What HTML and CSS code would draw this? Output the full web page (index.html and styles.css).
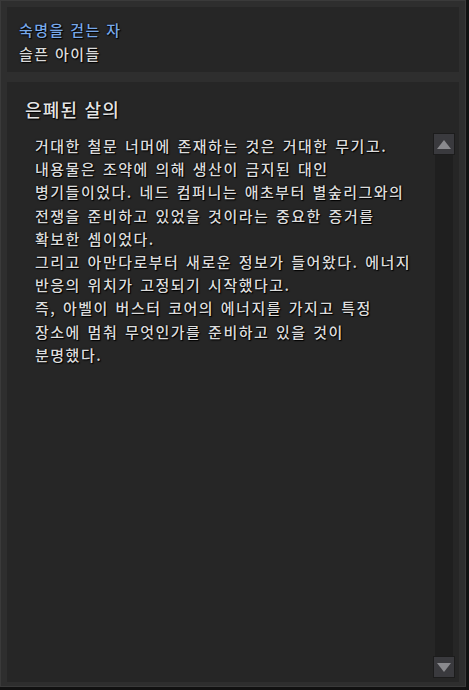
FILE: index.html
```html
<!DOCTYPE html>
<html lang="ko">
<head>
<meta charset="utf-8">
<link rel="stylesheet" href="styles.css">
</head>
<body>
<div class="frame">
  <header class="head">
    <div class="quest">숙명을 걷는 자</div>
    <div class="chapter">슬픈 아이들</div>
  </header>
  <section class="panel">
    <h1 class="title">은폐된 살의</h1>
    <div class="content">
      <p class="body">거대한 철문 너머에 존재하는 것은 거대한 무기고.<br>내용물은 조약에 의해 생산이 금지된 대인<br>병기들이었다. 네드 컴퍼니는 애초부터 별숲리그와의<br>전쟁을 준비하고 있었을 것이라는 중요한 증거를<br>확보한 셈이었다.<br>그리고 아만다로부터 새로운 정보가 들어왔다. 에너지<br>반응의 위치가 고정되기 시작했다고.<br>즉, 아벨이 버스터 코어의 에너지를 가지고 특정<br>장소에 멈춰 무엇인가를 준비하고 있을 것이<br>분명했다.</p>
      <div class="scrollbar">
        <div class="sb-btn"><svg width="14" height="9" viewBox="0 0 14 9"><polygon points="7,0 14,9 0,9" fill="#8a8a8e"/></svg></div>
        <div class="sb-track"></div>
        <div class="sb-btn"><svg width="14" height="9" viewBox="0 0 14 9"><polygon points="0,0 14,0 7,9" fill="#8a8a8e"/></svg></div>
      </div>
    </div>
  </section>
</div>
</body>
</html>
```
FILE: styles.css
```css
html, body {
  margin: 0;
  padding: 0;
  background: #111;
}
body {
  width: 469px;
  height: 690px;
  font-family: "Noto Sans CJK KR", "Noto Sans", sans-serif;
}
.frame {
  box-sizing: border-box;
  width: 466px;
  height: 687px;
  background: #2e2e2e;
  border: 1px solid #3a3a3a;
  padding: 6px 6px 4px 6px;
  display: flex;
  flex-direction: column;
  gap: 10px;
}
.head {
  background: #262626;
  height: 65px;
  padding: 14px 0 0 12px;
  box-sizing: border-box;
}
.quest {
  color: #78a8e8;
  font-size: 15px;
  font-weight: 500;
  line-height: 18px;
  letter-spacing: 1.4px;
  text-shadow: 0 0 2px #000, 1px 1px 1px #000;
}
.chapter {
  margin-top: 6px;
  color: #dadada;
  font-size: 15px;
  font-weight: 500;
  line-height: 18px;
  letter-spacing: 1.4px;
  text-shadow: 0 0 2px #000, 1px 1px 1px #000;
}
.panel {
  flex: 1;
  background: #262626;
  display: flex;
  flex-direction: column;
  padding: 0 0 4px 0;
}
.title {
  margin: 16px 0 0 18px;
  font-weight: 500;
  font-size: 18px;
  line-height: 22px;
  letter-spacing: 1.2px;
  color: #e4e4e4;
  text-shadow: 0 0 2px #000, 1px 1px 1px #000;
}
.content {
  flex: 1;
  display: flex;
  margin-top: 13px;
}
.body {
  flex: 1;
  margin: 1px 0 0 28px;
  color: #dcdcdc;
  font-size: 15px;
  font-weight: 500;
  line-height: 23.2px;
  text-shadow: 0 0 2px #000, 1px 1px 1px #000;
  letter-spacing: 1.5px;
  word-spacing: 1px;
}
.scrollbar {
  width: 22px;
  margin-right: 4px;
  display: flex;
  flex-direction: column;
}
.sb-btn {
  height: 22px;
  background: #3a3a3e;
  border: 1px solid #1c1c1c;
  box-sizing: border-box;
  display: flex;
  align-items: center;
  justify-content: center;
}
.sb-track {
  flex: 1;
  margin: 0 2px;
  background: #1f1f1f;
}
```
